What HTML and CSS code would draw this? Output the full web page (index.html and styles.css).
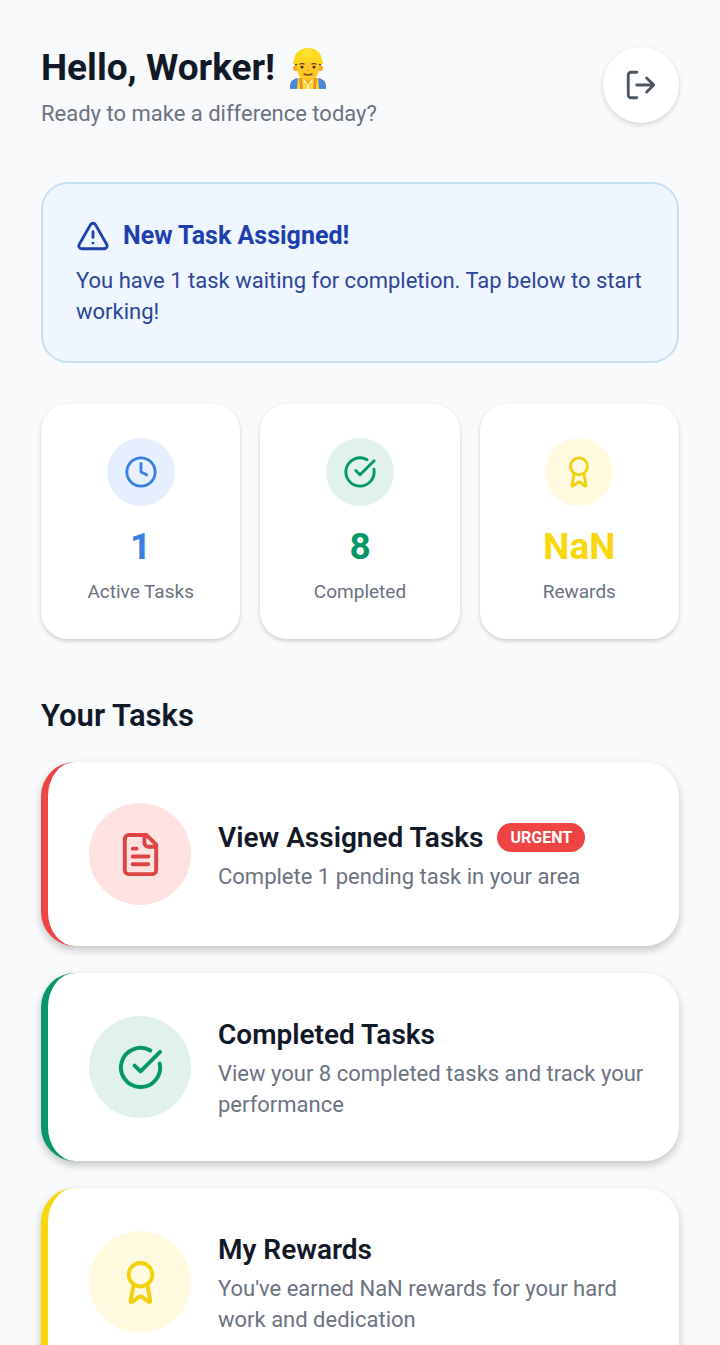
FILE: index.html
```html
<!DOCTYPE html>
<html lang="en">
<head>
<meta charset="utf-8">
<meta name="viewport" content="width=device-width, initial-scale=1">
<title>Worker Dashboard</title>
<link rel="stylesheet" href="styles.css">
</head>
<body>
<svg class="sprite" aria-hidden="true">
  <symbol id="clock" viewBox="0 0 24 24"><circle cx="12" cy="12" r="10"/><path d="M12 6v6l4 2"/></symbol>
  <symbol id="check" viewBox="0 0 24 24"><path d="M21.801 10A10 10 0 1 1 17 3.335"/><path d="m9 11 3 3L22 4"/></symbol>
  <symbol id="award" viewBox="0 0 24 24"><path d="m15.477 12.89 1.515 8.526a.5.5 0 0 1-.81.47l-3.58-2.687a1 1 0 0 0-1.197 0l-3.586 2.686a.5.5 0 0 1-.81-.469l1.514-8.526"/><circle cx="12" cy="8" r="6"/></symbol>
  <symbol id="file" viewBox="0 0 24 24"><path d="M15 2H6a2 2 0 0 0-2 2v16a2 2 0 0 0 2 2h12a2 2 0 0 0 2-2V7Z"/><path d="M14 2v4a2 2 0 0 0 2 2h4M10 9H8M16 13H8M16 17H8"/></symbol>
  <symbol id="logout" viewBox="0 0 24 24"><path d="M9 21H5a2 2 0 0 1-2-2V5a2 2 0 0 1 2-2h4"/><path d="m16 17 5-5-5-5M21 12H9"/></symbol>
  <symbol id="alert" viewBox="0 0 24 24"><path d="m21.73 18-8-14a2 2 0 0 0-3.48 0l-8 14A2 2 0 0 0 4 21h16a2 2 0 0 0 1.73-3"/><path d="M12 9v4M12 17h.01"/></symbol>
</svg>
<main class="screen">
  <header class="header">
    <div>
      <h1 class="greeting">Hello, Worker!
        <svg class="worker" viewBox="0 0 38 42" role="img" aria-label="Construction worker">
          <path fill="#4f86d9" d="M1 42v-3c0-5 4-8 10-8h16c6 0 10 3 10 8v3z"/>
          <path fill="#f0b429" d="M14 28h10v6l-5 4-5-4z"/>
          <path fill="#fdd92b" d="M9 31l5-1 5 7 5-7 5 1 1 11H8z"/>
          <path fill="#f08a2c" d="M10 31h3l1 11h-3zM25 31h3l-1 11h-3z"/>
          <path fill="#edf0f2" d="M15 33l4 5 4-5v9h-8z"/>
          <path fill="#fdd92b" d="M14 35l4 2v5h-4zM24 35l-4 2v5h4z"/>
          <path fill="#543930" d="M6 14h26v7l-3 3H9l-3-3z"/>
          <circle cx="7" cy="21" r="3" fill="#f2b21f"/><circle cx="31" cy="21" r="3" fill="#f2b21f"/>
          <path fill="#fcc727" d="M8 15h22v7c0 7-5 11-11 11S8 29 8 22z"/>
          <path fill="none" stroke="#6b4524" stroke-width="1.3" stroke-linecap="round" d="M11 17q2-1.500 4 0M23 17q2-1.500 4 0"/>
          <circle cx="13" cy="20" r="1.500" fill="#42301f"/><circle cx="25" cy="20" r="1.500" fill="#42301f"/>
          <path fill="#dfa01b" d="M17 23h4l-2 1.500z"/>
          <path fill="none" stroke="#784327" stroke-width="1.500" stroke-linecap="round" d="M15 27q4 2 8 0"/>
          <path fill="#fbd91d" d="M5 14C5 6 11 1 19 1s14 5 14 13l2 2q-1 1-3 1-13-3-26 0-2 0-3-1z"/>
          <path fill="#fde12f" d="M15 2q4-2 8 0l1 8q-5-1-10 0z"/>
        </svg>
      </h1>
      <p class="text">Ready to make a difference today?</p>
    </div>
    <button class="logout" type="button" aria-label="Log out"><svg class="icon"><use href="#logout"/></svg></button>
  </header>

  <section class="notice">
    <h2 class="notice-title"><svg class="icon"><use href="#alert"/></svg>New Task Assigned!</h2>
    <p class="notice-text">You have 1 task waiting for completion. Tap below to start working!</p>
  </section>

  <section class="stats" aria-label="Statistics">
    <div class="stat blue"><span class="disc"><svg class="icon"><use href="#clock"/></svg></span><strong class="value">1</strong><span class="label">Active Tasks</span></div>
    <div class="stat green"><span class="disc"><svg class="icon"><use href="#check"/></svg></span><strong class="value">8</strong><span class="label">Completed</span></div>
    <div class="stat yellow"><span class="disc"><svg class="icon"><use href="#award"/></svg></span><strong class="value">NaN</strong><span class="label">Rewards</span></div>
  </section>

  <h2 class="section-title">Your Tasks</h2>
  <nav class="tasks" aria-label="Your tasks">
    <a class="task red" href="#assigned">
      <span class="disc large"><svg class="icon"><use href="#file"/></svg></span>
      <span class="task-body"><span class="task-title">View Assigned Tasks <span class="badge">URGENT</span></span><span class="text">Complete 1 pending task in your area</span></span>
    </a>
    <a class="task green" href="#completed">
      <span class="disc large"><svg class="icon"><use href="#check"/></svg></span>
      <span class="task-body"><span class="task-title">Completed Tasks</span><span class="text">View your 8 completed tasks and track your performance</span></span>
    </a>
    <a class="task yellow" href="#rewards">
      <span class="disc large"><svg class="icon"><use href="#award"/></svg></span>
      <span class="task-body"><span class="task-title">My Rewards</span><span class="text">You've earned NaN rewards for your hard work and dedication</span></span>
    </a>
  </nav>
</main>
</body>
</html>
```
FILE: styles.css
```css
* { box-sizing: border-box; }

body {
  margin: 0;
  background: #f9fafb;
  color: #111827;
  font-family: Roboto, "Liberation Sans", sans-serif;
}

h1, h2, p { margin: 0; }

.sprite { display: none; }

.screen {
  height: 100vh;
  padding: 41px;
  overflow-y: auto;
  scrollbar-width: none;
}

.icon {
  width: 34px;
  height: 34px;
  flex: none;
  fill: none;
  stroke: currentColor;
  stroke-width: 2;
  stroke-linecap: round;
  stroke-linejoin: round;
}

.header {
  display: flex;
  align-items: center;
  justify-content: space-between;
  margin-bottom: 53px;
}

.greeting {
  display: flex;
  align-items: center;
  gap: 14px;
  margin-bottom: 3px;
  font-size: 37px;
  font-weight: 700;
  line-height: 54px;
}

.worker { width: 38px; height: 42px; }

.text {
  color: #6b7280;
  font-size: 22px;
  line-height: 31px;
}

.logout {
  display: grid;
  place-items: center;
  width: 76px;
  height: 76px;
  padding: 0;
  border: 0;
  border-radius: 50%;
  background: #fff;
  color: #4b5563;
  box-shadow: 0 2px 5px rgb(0 0 0 / 16%);
}

.notice {
  margin-bottom: 41px;
  padding: 34px 33px;
  border: 2px solid #c5dff0;
  border-radius: 27px;
  background: #eff6ff;
  color: #1e40af;
}

.notice-title {
  display: flex;
  align-items: center;
  gap: 13px;
  margin-bottom: 11px;
  font-size: 25px;
  font-weight: 700;
  line-height: 36px;
}

.notice-text {
  color: #2d4596;
  font-size: 22px;
  line-height: 31px;
}

.stats {
  display: grid;
  grid-template-columns: repeat(3, 1fr);
  gap: 20px;
  margin-bottom: 54px;
}

.stat {
  display: flex;
  flex-direction: column;
  align-items: center;
  padding: 34px 20px;
  border-radius: 27px;
  background: #fff;
  box-shadow: 0 2px 4px rgb(0 0 0 / 18%);
}

.disc {
  display: grid;
  place-items: center;
  flex: none;
  width: 68px;
  height: 68px;
  border-radius: 50%;
  background: var(--tint);
  color: var(--accent);
}

.disc.large { width: 102px; height: 102px; }
.disc.large .icon { width: 47px; height: 47px; }

.value {
  margin: 18px 0 9px;
  color: var(--accent);
  font-size: 37px;
  line-height: 46px;
}

.label {
  color: #6b7280;
  font-size: 19px;
  line-height: 26px;
}

.blue { --accent: #3b7ee2; --tint: #e6effd; }
.green { --accent: #059669; --tint: #e0f2eb; }
.yellow { --accent: #f8d80c; --tint: #fffadf; }
.red { --accent: #ef4444; --tint: #fee2e2; }

.red .icon { color: #dc4545; }
.yellow .icon { color: #f2d00e; }

.section-title {
  margin-bottom: 23px;
  font-size: 31px;
  font-weight: 600;
  line-height: 46px;
}

.tasks { display: grid; gap: 27px; }

.task {
  display: flex;
  align-items: center;
  gap: 27px;
  padding: 41px 30px 41px 41px;
  border-left: 7px solid var(--accent);
  border-radius: 34px;
  background: #fff;
  box-shadow: 0 4px 8px rgb(0 0 0 / 22%);
  color: inherit;
  text-decoration: none;
}

.task-body {
  display: flex;
  flex-direction: column;
  gap: 3px;
}

.task-title {
  display: flex;
  align-items: center;
  gap: 14px;
  font-size: 28px;
  font-weight: 600;
  line-height: 41px;
}

.badge {
  padding: 4px 13px;
  border-radius: 20px;
  background: #ef4444;
  color: #fff;
  font-size: 16px;
  font-weight: 700;
  line-height: 21px;
}
```
